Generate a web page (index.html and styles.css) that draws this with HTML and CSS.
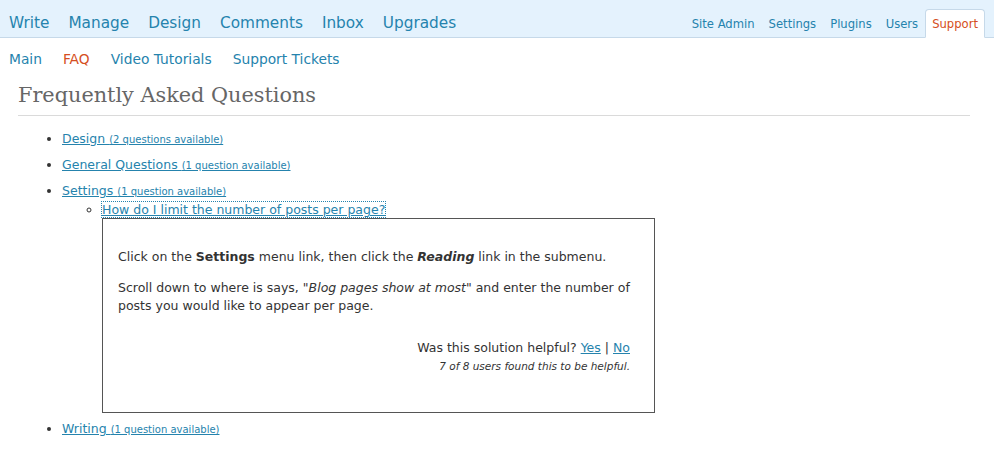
FILE: index.html
```html
<!DOCTYPE html>
<html>
<head>
<meta charset="utf-8">
<link rel="stylesheet" href="styles.css">
</head>
<body>
<header class="topbar">
  <nav class="mainnav">
    <a href="#">Write</a>
    <a href="#">Manage</a>
    <a href="#">Design</a>
    <a href="#">Comments</a>
    <a href="#">Inbox</a>
    <a href="#">Upgrades</a>
  </nav>
  <nav class="sidenav">
    <a href="#">Site Admin</a>
    <a href="#">Settings</a>
    <a href="#">Plugins</a>
    <a href="#">Users</a>
    <a href="#" class="current">Support</a>
  </nav>
</header>
<nav class="subnav">
  <a href="#">Main</a>
  <a href="#" class="current">FAQ</a>
  <a href="#">Video Tutorials</a>
  <a href="#">Support Tickets</a>
</nav>
<main class="wrap">
  <h2 class="title">Frequently Asked Questions</h2>
  <ul class="cats">
    <li><a href="#">Design <small>(2 questions available)</small></a></li>
    <li><a href="#">General Questions <small>(1 question available)</small></a></li>
    <li class="open"><a href="#">Settings <small>(1 question available)</small></a>
      <ul class="questions">
        <li><a href="#" class="focused">How do I limit the number of posts per page?</a>
          <div class="answer">
            <p>Click on the <strong>Settings</strong> menu link, then click the <strong><em>Reading</em></strong> link in the submenu.</p>
            <p>Scroll down to where is says, "<em>Blog pages show at most</em>" and enter the number of posts you would like to appear per page.</p>
            <div class="helpful">
              <div class="ask">Was this solution helpful? <a href="#">Yes</a> | <a href="#">No</a></div>
              <div class="stats">7 of 8 users found this to be helpful.</div>
            </div>
          </div>
        </li>
      </ul>
    </li>
    <li><a href="#">Writing <small>(1 question available)</small></a></li>
  </ul>
</main>
</body>
</html>
```
FILE: styles.css
```css
html, body {
  margin: 0;
  padding: 0;
  background: #fff;
}
body {
  font-family: "DejaVu Sans", "Open Sans", sans-serif;
  color: #333;
}
a {
  color: #2583ad;
}
.topbar {
  display: flex;
  justify-content: space-between;
  align-items: flex-end;
  height: 37px;
  background: #e4f2fd;
  border-bottom: 1px solid #c6d9e9;
}
.mainnav {
  display: flex;
  gap: 19px;
  padding: 0 0 5px 9px;
  font-size: 15.3px;
}
.mainnav a {
  text-decoration: none;
}
.sidenav {
  display: flex;
  align-items: flex-end;
  padding-right: 9px;
  font-size: 11.6px;
  margin-bottom: -1px;
}
.sidenav a {
  text-decoration: none;
  padding: 0 7px 6px;
  line-height: 16px;
}
.sidenav a.current {
  color: #d54e21;
  background: #fff;
  border: 1px solid #c6d9e9;
  border-bottom: 1px solid #fff;
  border-radius: 4px 4px 0 0;
  padding: 6px 6px 5px;
}
.subnav {
  display: flex;
  gap: 21px;
  padding: 13px 9px 0;
  font-size: 13.8px;
  height: 18px;
}
.subnav a {
  text-decoration: none;
}
.subnav a.current {
  color: #d54e21;
}
.wrap {
  padding: 0 24px 0 18px;
}
.title {
  font-family: "DejaVu Serif", Georgia, serif;
  font-weight: normal;
  font-size: 20.8px;
  color: #666;
  margin: 14px 0 0;
  padding: 0 0 8px;
  border-bottom: 1px solid #dadada;
}
.cats {
  margin: 15px 0 0;
  padding-left: 44px;
  font-size: 12.5px;
  list-style: disc;
}
.cats > li {
  line-height: 16px;
  margin-bottom: 9px;
}
.cats > li.open {
  margin-bottom: 8px;
}
.cats small {
  font-size: 10px;
}
.questions {
  list-style: circle;
  padding-left: 40px;
  margin: 2px 0 0;
}
.questions li {
  line-height: 16px;
}
.focused {
  outline: 1px dotted #2583ad;
}
.answer {
  border: 1px solid #555;
  margin-top: 0;
  width: 536px;
  height: 164px;
  padding: 29px 0 0 15px;
  font-size: 12.5px;
  line-height: 18px;
  color: #333;
}
.answer p {
  margin: 0 0 10px;
  padding-right: 20px;
}
.answer p:first-child {
  margin-bottom: 13px;
}
.helpful {
  text-align: right;
  padding-right: 24px;
  margin-top: 24px;
}
.ask {
  line-height: 18px;
}
.stats {
  font-size: 10.5px;
  font-style: italic;
  line-height: 16px;
  margin-top: 1px;
}
```
